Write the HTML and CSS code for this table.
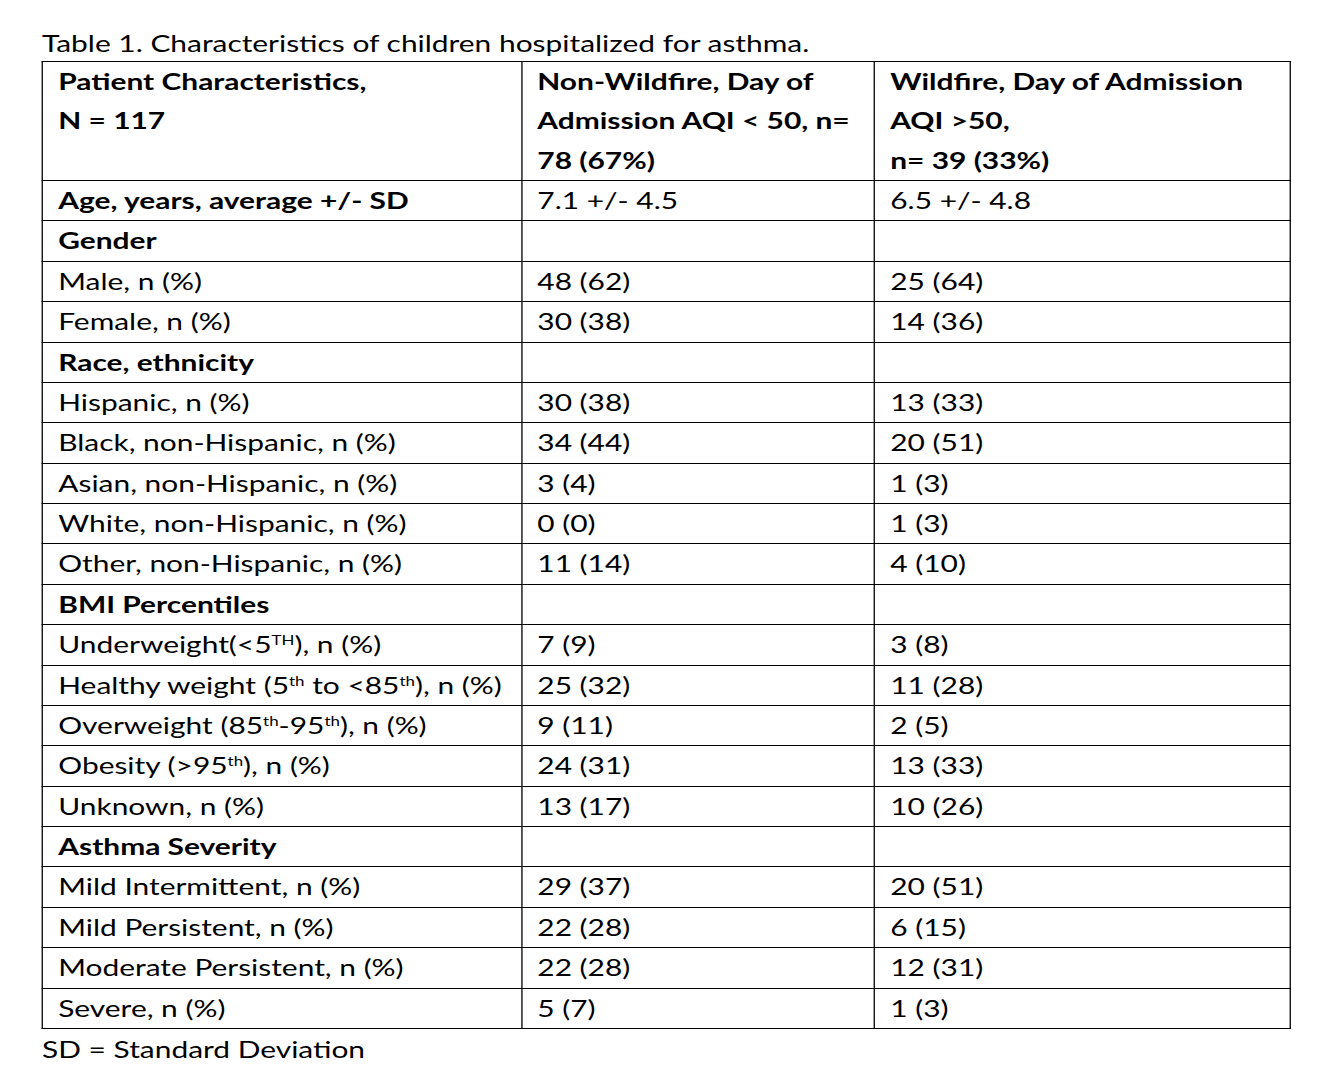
FILE: index.html
```html
<!DOCTYPE html>
<html>
<head>
<meta charset="utf-8">
<link rel="stylesheet" href="styles.css">
</head>
<body>
<div class="page">
  <div class="caption">Table 1. Characteristics of children hospitalized for asthma.</div>
  <table class="tbl">
    <colgroup>
      <col class="c1"><col class="c2"><col class="c3">
    </colgroup>
    <thead>
      <tr class="head">
        <th>Patient Characteristics,<br>N = 117</th>
        <th>Non-Wildfire, Day of<br>Admission AQI &lt; 50, n=<br>78 (67%)</th>
        <th>Wildfire, Day of Admission<br>AQI &gt;50,<br>n= 39 (33%)</th>
      </tr>
    </thead>
    <tbody>
      <tr><td class="b">Age, years, average +/- SD</td><td>7.1 +/- 4.5</td><td>6.5 +/- 4.8</td></tr>
      <tr><td class="b">Gender</td><td></td><td></td></tr>
      <tr><td>Male, n (%)</td><td>48 (62)</td><td>25 (64)</td></tr>
      <tr><td>Female, n (%)</td><td>30 (38)</td><td>14 (36)</td></tr>
      <tr><td class="b">Race, ethnicity</td><td></td><td></td></tr>
      <tr><td>Hispanic, n (%)</td><td>30 (38)</td><td>13 (33)</td></tr>
      <tr><td>Black, non-Hispanic, n (%)</td><td>34 (44)</td><td>20 (51)</td></tr>
      <tr><td>Asian, non-Hispanic, n (%)</td><td>3 (4)</td><td>1 (3)</td></tr>
      <tr><td>White, non-Hispanic, n (%)</td><td>0 (0)</td><td>1 (3)</td></tr>
      <tr><td>Other, non-Hispanic, n (%)</td><td>11 (14)</td><td>4 (10)</td></tr>
      <tr><td class="b">BMI Percentiles</td><td></td><td></td></tr>
      <tr><td>Underweight(&lt;5<sup>TH</sup>), n (%)</td><td>7 (9)</td><td>3 (8)</td></tr>
      <tr><td>Healthy weight (5<sup>th</sup> to &lt;85<sup>th</sup>), n (%)</td><td>25 (32)</td><td>11 (28)</td></tr>
      <tr><td>Overweight (85<sup>th</sup>-95<sup>th</sup>), n (%)</td><td>9 (11)</td><td>2 (5)</td></tr>
      <tr><td>Obesity (&gt;95<sup>th</sup>), n (%)</td><td>24 (31)</td><td>13 (33)</td></tr>
      <tr><td>Unknown, n (%)</td><td>13 (17)</td><td>10 (26)</td></tr>
      <tr><td class="b">Asthma Severity</td><td></td><td></td></tr>
      <tr><td>Mild Intermittent, n (%)</td><td>29 (37)</td><td>20 (51)</td></tr>
      <tr><td>Mild Persistent, n (%)</td><td>22 (28)</td><td>6 (15)</td></tr>
      <tr><td>Moderate Persistent, n (%)</td><td>22 (28)</td><td>12 (31)</td></tr>
      <tr><td>Severe, n (%)</td><td>5 (7)</td><td>1 (3)</td></tr>
    </tbody>
  </table>
  <div class="footnote">SD = Standard Deviation</div>
</div>
</body>
</html>
```

FILE: styles.css
```css
html, body {
  margin: 0;
  padding: 0;
  background: #fff;
}
body {
  font-family: Lato, "Open Sans", sans-serif;
  color: #000;
  font-size: 23px;
  overflow: hidden;
}
/* the source document is rendered with a wide horizontal aspect */
.page {
  width: 960px;
  padding: 25px 0 0 32.3px;
  transform: scaleX(1.3);
  transform-origin: 0 0;
}
.caption {
  line-height: 36px;
  height: 36px;
  white-space: nowrap;
}
.tbl {
  border-collapse: collapse;
  table-layout: fixed;
  width: 960px;
}
.c1 { width: 368.5px; }
.c2 { width: 271.5px; }
.c3 { width: 320px; }
.tbl th, .tbl td {
  border: 1px solid #000;
  text-align: left;
  vertical-align: middle;
  padding: 0 0 0 11.5px;
  height: 39.38px;
  line-height: 39.38px;
  font-weight: normal;
  white-space: nowrap;
}
.tbl th {
  font-weight: bold;
  vertical-align: top;
  line-height: 39.3px;
  height: 118px;
}
.tbl td.b {
  font-weight: bold;
}
sup {
  font-size: 13px;
  line-height: 0;
  vertical-align: 8px;
}
.footnote {
  line-height: 40px;
  white-space: nowrap;
}
```
